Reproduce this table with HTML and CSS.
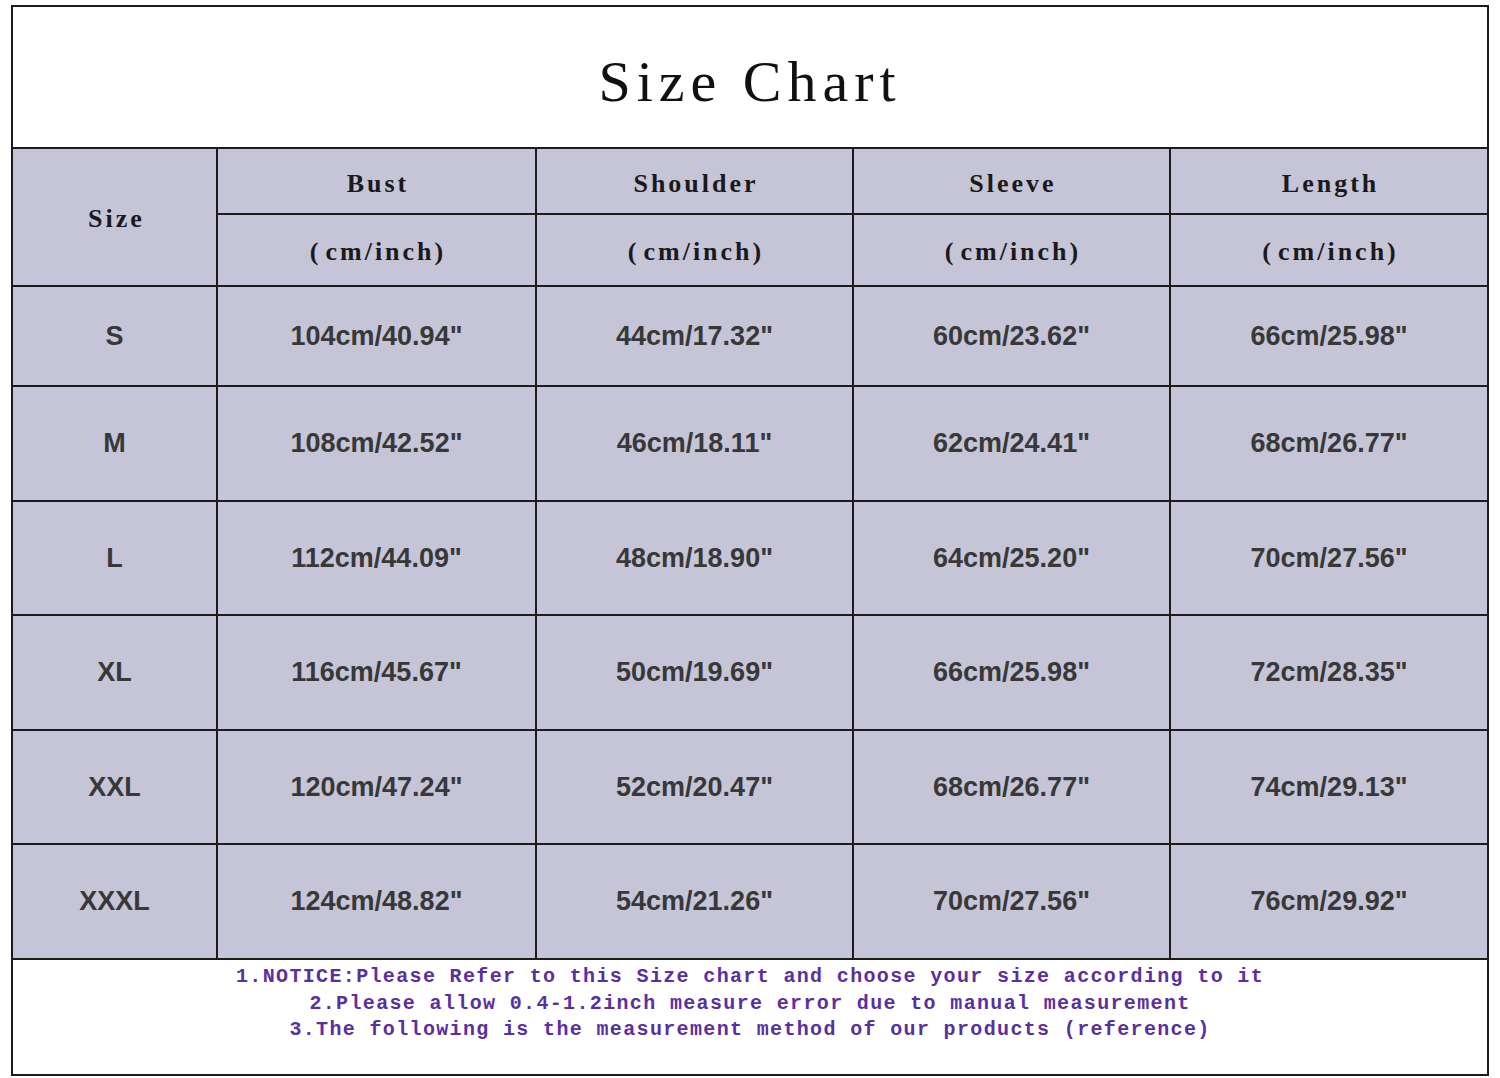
FILE: index.html
```html
<!DOCTYPE html>
<html>
<head>
<meta charset="utf-8">
<title>Size Chart</title>
<link rel="stylesheet" href="styles.css">
</head>
<body>
<table class="chart">
  <colgroup>
    <col class="c-size">
    <col class="c-bust">
    <col class="c-shoulder">
    <col class="c-sleeve">
    <col class="c-length">
  </colgroup>
  <tr class="r-title"><td colspan="5" class="title">Size Chart</td></tr>
  <tr class="r-h1">
    <td rowspan="2" class="head">Size</td>
    <td class="head">Bust</td>
    <td class="head">Shoulder</td>
    <td class="head">Sleeve</td>
    <td class="head">Length</td>
  </tr>
  <tr class="r-h2">
    <td class="head unit">(<span class="gap"></span>cm/inch)</td>
    <td class="head unit">(<span class="gap"></span>cm/inch)</td>
    <td class="head unit">(<span class="gap"></span>cm/inch)</td>
    <td class="head unit">(<span class="gap"></span>cm/inch)</td>
  </tr>
  <tr class="r-s"><td class="val">S</td><td class="val">104cm/40.94"</td><td class="val">44cm/17.32"</td><td class="val">60cm/23.62"</td><td class="val">66cm/25.98"</td></tr>
  <tr class="r-m"><td class="val">M</td><td class="val">108cm/42.52"</td><td class="val">46cm/18.11"</td><td class="val">62cm/24.41"</td><td class="val">68cm/26.77"</td></tr>
  <tr class="r-l"><td class="val">L</td><td class="val">112cm/44.09"</td><td class="val">48cm/18.90"</td><td class="val">64cm/25.20"</td><td class="val">70cm/27.56"</td></tr>
  <tr class="r-xl"><td class="val">XL</td><td class="val">116cm/45.67"</td><td class="val">50cm/19.69"</td><td class="val">66cm/25.98"</td><td class="val">72cm/28.35"</td></tr>
  <tr class="r-xxl"><td class="val">XXL</td><td class="val">120cm/47.24"</td><td class="val">52cm/20.47"</td><td class="val">68cm/26.77"</td><td class="val">74cm/29.13"</td></tr>
  <tr class="r-xxxl"><td class="val">XXXL</td><td class="val">124cm/48.82"</td><td class="val">54cm/21.26"</td><td class="val">70cm/27.56"</td><td class="val">76cm/29.92"</td></tr>
  <tr class="r-notes">
    <td colspan="5" class="notes">
      <div>1.NOTICE:Please Refer to this Size chart and choose your size according to it</div>
      <div>2.Please allow 0.4-1.2inch measure error due to manual measurement</div>
      <div>3.The following is the measurement method of our products (reference)</div>
    </td>
  </tr>
</table>
</body>
</html>
```

FILE: styles.css
```css
html, body {
  margin: 0;
  padding: 0;
  background: #ffffff;
}

body {
  padding: 5px 0 0 11px;
}

.chart {
  border-collapse: collapse;
  table-layout: fixed;
  width: 1476px;
  border: 2px solid #1c1c1c;
}

.c-size { width: 205px; }
.c-bust { width: 319px; }
.c-shoulder { width: 317px; }
.c-sleeve { width: 317px; }
.c-length { width: 318px; }

.chart td {
  border: 2px solid #1c1c1c;
  padding: 0;
  text-align: center;
  vertical-align: middle;
  background: #c5c5d7;
}

.r-title { height: 142px; }
.r-h1 { height: 66px; }
.r-h2 { height: 72px; }
.r-s { height: 100px; }
.r-m { height: 115px; }
.r-l { height: 114px; }
.r-xl { height: 115px; }
.r-xxl { height: 114px; }
.r-xxxl { height: 115px; }
.r-notes { height: 116px; }

.chart td.title {
  background: #ffffff;
  font-family: "Liberation Serif", "DejaVu Serif", serif;
  font-size: 58px;
  letter-spacing: 6px;
  color: #111111;
  padding: 8px 0 0 0;
}

.head {
  font-family: "Liberation Serif", "DejaVu Serif", serif;
  font-weight: bold;
  font-size: 26px;
  letter-spacing: 3px;
  color: #1a1a1a;
}

.r-h1 .head { padding: 6px 0 0 3px; }
.r-h1 .head[rowspan] { padding: 4px 0 0 4px; }
.r-h2 .head { padding: 4px 0 0 3px; }

.gap {
  display: inline-block;
  width: 4px;
}

.val {
  font-family: "Liberation Sans", Arial, sans-serif;
  font-weight: bold;
  font-size: 27px;
  color: #383838;
  padding-top: 9px;
}

.chart td.notes {
  background: #ffffff;
  vertical-align: top;
  padding-top: 4px;
  font-family: "Liberation Mono", "DejaVu Sans Mono", monospace;
  font-weight: bold;
  font-size: 20px;
  line-height: 26.5px;
  letter-spacing: 1.35px;
  color: #5a2f9e;
}
```
